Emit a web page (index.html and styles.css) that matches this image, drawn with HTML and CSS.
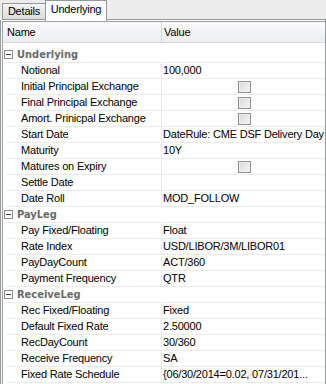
FILE: index.html
```html
<!DOCTYPE html>
<html>
<head>
<meta charset="utf-8">
<link rel="stylesheet" href="styles.css">
</head>
<body>
<div class="window">
  <div class="tabs">
    <div class="tab">Details</div>
    <div class="tab active">Underlying</div>
    <div class="tab-fill"></div>
  </div>
  <div class="panel">
    <div class="grid">
      <div class="header">
        <div class="hcell hname">Name</div>
        <div class="hcell hvalue">Value</div>
      </div>
      <div class="rows">
        <div class="cat"><span class="toggle"></span>Underlying</div>
        <div class="row"><div class="name">Notional</div><div class="value">100,000</div></div>
        <div class="row"><div class="name">Initial Principal Exchange</div><div class="value center"><span class="check"></span></div></div>
        <div class="row"><div class="name">Final Principal Exchange</div><div class="value center"><span class="check"></span></div></div>
        <div class="row"><div class="name">Amort. Prinicpal Exchange</div><div class="value center"><span class="check"></span></div></div>
        <div class="row"><div class="name">Start Date</div><div class="value">DateRule: CME DSF Delivery Day</div></div>
        <div class="row"><div class="name">Maturity</div><div class="value">10Y</div></div>
        <div class="row"><div class="name">Matures on Expiry</div><div class="value center"><span class="check"></span></div></div>
        <div class="row"><div class="name">Settle Date</div><div class="value"></div></div>
        <div class="row"><div class="name">Date Roll</div><div class="value">MOD_FOLLOW</div></div>
        <div class="cat"><span class="toggle"></span>PayLeg</div>
        <div class="row"><div class="name">Pay Fixed/Floating</div><div class="value">Float</div></div>
        <div class="row"><div class="name">Rate Index</div><div class="value">USD/LIBOR/3M/LIBOR01</div></div>
        <div class="row"><div class="name">PayDayCount</div><div class="value">ACT/360</div></div>
        <div class="row"><div class="name">Payment Frequency</div><div class="value">QTR</div></div>
        <div class="cat"><span class="toggle"></span>ReceiveLeg</div>
        <div class="row"><div class="name">Rec Fixed/Floating</div><div class="value">Fixed</div></div>
        <div class="row"><div class="name">Default Fixed Rate</div><div class="value">2.50000</div></div>
        <div class="row"><div class="name">RecDayCount</div><div class="value">30/360</div></div>
        <div class="row"><div class="name">Receive Frequency</div><div class="value">SA</div></div>
        <div class="row"><div class="name">Fixed Rate Schedule</div><div class="value">{06/30/2014=0.02, 07/31/201...</div></div>
      </div>
    </div>
  </div>
</div>
</body>
</html>
```
FILE: styles.css
```css
html, body {
  margin: 0;
  padding: 0;
  background: #ffffff;
}

.window {
  width: 326px;
  height: 384px;
  overflow: hidden;
  font-family: "Liberation Sans", Arial, sans-serif;
  font-size: 11px;
  letter-spacing: -0.2px;
  color: #000000;
  background: #ececec;
}

.tabs {
  display: flex;
  align-items: flex-end;
  height: 20px;
  padding-left: 2px;
}

.tab {
  box-sizing: border-box;
  width: 43px;
  height: 17px;
  text-align: center;
  line-height: 15px;
  border: 1px solid #919b9c;
  border-right: none;
  background: linear-gradient(#f4f4f4, #dcdcdc);
}

.tab.active {
  width: 62px;
  height: 21px;
  margin-bottom: -1px;
  line-height: 17px;
  border: 1px solid #919b9c;
  border-bottom: none;
  background: #fcfcfe;
  position: relative;
  z-index: 1;
}

.tab-fill {
  flex: 1;
  height: 20px;
  box-sizing: border-box;
  border-bottom: 1px solid #919b9c;
}

.panel {
  box-sizing: border-box;
  height: 364px;
  border-left: 1px solid #919b9c;
  border-right: 1px solid #919b9c;
  background: #fcfcfe;
  padding: 1px 0 0 1px;
}

.grid {
  box-sizing: border-box;
  height: 100%;
  border-top: 1px solid #a0a0a0;
  border-left: 1px solid #a0a0a0;
  background: #ffffff;
}

.header {
  display: grid;
  grid-template-columns: 159px 1fr;
  height: 21px;
  box-sizing: border-box;
  border-bottom: 1px solid #d8d8d8;
  background: linear-gradient(#fbfbfc, #eceef0);
  margin-bottom: 4px;
}

.hcell {
  line-height: 20px;
  white-space: nowrap;
}

.hname {
  padding-left: 4px;
  border-right: 1px solid #d8d8d8;
}

.hvalue {
  padding-left: 2px;
}

.rows {
  display: flex;
  flex-direction: column;
}

.cat {
  box-sizing: border-box;
  height: 16px;
  line-height: 15px;
  display: flex;
  align-items: center;
  font-family: "DejaVu Sans Condensed", "DejaVu Sans", sans-serif;
  letter-spacing: 0;
  font-weight: bold;
  color: #6a6a6a;
  border-bottom: 1px solid #ebebeb;
  margin-left: 3px;
}

.toggle {
  box-sizing: border-box;
  width: 9px;
  height: 9px;
  border: 1px solid #8c8c8c;
  margin-left: -2px;
  margin-right: 4px;
  position: relative;
  background: #ffffff;
}

.toggle::after {
  content: "";
  position: absolute;
  left: 1px;
  top: 3px;
  width: 5px;
  height: 1px;
  background: #444444;
}

.row {
  display: grid;
  grid-template-columns: 159px 1fr;
  height: 16px;
}

.name, .value {
  box-sizing: border-box;
  height: 16px;
  line-height: 15px;
  border-bottom: 1px solid #ebebeb;
  white-space: nowrap;
  overflow: hidden;
}

.name {
  margin-left: 3px;
  padding-left: 15px;
  border-right: 1px solid #ebebeb;
}

.value {
  padding-left: 1px;
}

.value.center {
  display: flex;
  justify-content: center;
  align-items: center;
}

.check {
  box-sizing: border-box;
  width: 13px;
  height: 12px;
  border: 1px solid #919191;
  background: linear-gradient(135deg, #d8d8d8, #f6f6f6);
  box-shadow: inset 0 0 0 1px #eeeeee;
}
```
